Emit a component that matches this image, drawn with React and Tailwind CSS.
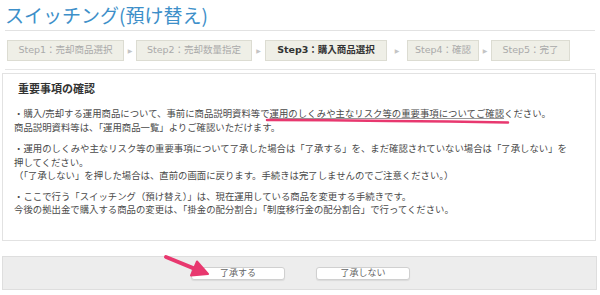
const STEPS = [
  { label: "Step1：売却商品選択", width: "w-[117px]", after: "w-[12px]" },
  { label: "Step2：売却数量指定", width: "w-[116px]", after: "w-[13px]" },
  { label: "Step3：購入商品選択", width: "w-[122px]", after: "w-[20px]", active: true },
  { label: "Step4：確認", width: "w-[72px]", after: "w-[12px]" },
  { label: "Step5：完了", width: "w-[79px]", after: "" },
];

function StepBar() {
  return (
    <div className="flex items-center pl-[7px] mt-[9px] h-[21px]">
      {STEPS.map((s) => (
        <div key={s.label} className="flex items-center h-full">
          <div
            className={`${s.width} h-full flex items-center justify-center border border-[#dcdcd2] bg-[#efefe7] text-[9.5px] whitespace-nowrap ${
              s.active ? "font-bold text-[#333]" : "text-[#aaa]"
            }`}
          >
            {s.label}
          </div>
          {s.after && (
            <div className={`${s.after} flex justify-center`}>
              <span className="text-[6px] text-[#c4c4c4]">▶</span>
            </div>
          )}
        </div>
      ))}
    </div>
  );
}

function Notice() {
  return (
    <div className="mx-[2px] mr-[4px] mt-[3px] h-[168px] border border-[#e2e2e2] bg-white pl-[11px] pt-[9px] text-[9.4px] leading-[13.5px] text-[#4a4a4a] whitespace-nowrap">
      <h2 className="pl-[4px] text-[11px] font-bold leading-[14px] text-[#333]">重要事項の確認</h2>
      <p className="mt-[10px]">
        ・購入/売却する運用商品について、事前に商品説明資料等で
        <span className="underline decoration-[#999] underline-offset-[1px]">
          運用のしくみや主なリスク等の重要事項についてご確認
        </span>
        ください。
        <br />
        商品説明資料等は、「運用商品一覧」よりご確認いただけます。
      </p>
      <p className="mt-[8px]">
        ・運用のしくみや主なリスク等の重要事項について了承した場合は「了承する」を、まだ確認されていない場合は「了承しない」を
        <br />
        押してください。
        <br />
        （「了承しない」を押した場合は、直前の画面に戻ります。手続きは完了しませんのでご注意ください。）
      </p>
      <p className="mt-[7px]">
        ・ここで行う「スイッチング（預け替え）」は、現在運用している商品を変更する手続きです。
        <br />
        今後の拠出金で購入する商品の変更は、「掛金の配分割合」「制度移行金の配分割合」で行ってください。
      </p>
    </div>
  );
}

function Annotations() {
  return (
    <svg className="absolute left-0 top-0 pointer-events-none" width="600" height="295" viewBox="0 0 600 295">
      <path d="M267 120 Q 390 120.5 508 122.5" stroke="#e8386f" strokeWidth="2.5" fill="none" strokeLinecap="round" />
      <line x1="166" y1="257" x2="195" y2="268.8" stroke="#e8386f" strokeWidth="4" strokeLinecap="round" />
      <path d="M208 274 L191 275.5 L197 261.5 Z" fill="#e8386f" stroke="#e8386f" strokeWidth="2" strokeLinejoin="round" />
    </svg>
  );
}

export default function App() {
  return (
    <div
      className="relative w-[600px] h-[295px] overflow-hidden bg-white"
      style={{ fontFamily: '"DejaVu Sans", "Noto Sans CJK JP", sans-serif' }}
    >
      <h1
        className="pl-[5px] pt-[4px] text-[19px] leading-[22px] text-[#3d8fc9]"
        style={{ fontFamily: '"Noto Sans CJK JP", sans-serif' }}
      >
        スイッチング(預け替え)
      </h1>
      <div className="mx-[5px] mt-[4px] border-t border-[#e2e2e2]" />
      <StepBar />
      <div className="mx-[5px] mt-[8px] border-t border-[#e6e6e6]" />
      <Notice />
      <div className="mx-[2px] mr-[3px] mt-[15px] h-[34px] border border-[#dedede] bg-[#ededed] flex items-center pl-[188px] gap-[31px]">
        <button className="w-[94px] h-[13px] rounded-[3px] border border-[#d0d0d0] bg-white text-[9px] leading-none text-[#666] shadow-[0_1px_1px_rgba(0,0,0,0.08)]">
          了承する
        </button>
        <button className="w-[94px] h-[13px] rounded-[3px] border border-[#d0d0d0] bg-white text-[9px] leading-none text-[#666] shadow-[0_1px_1px_rgba(0,0,0,0.08)]">
          了承しない
        </button>
      </div>
      <Annotations />
    </div>
  );
}
